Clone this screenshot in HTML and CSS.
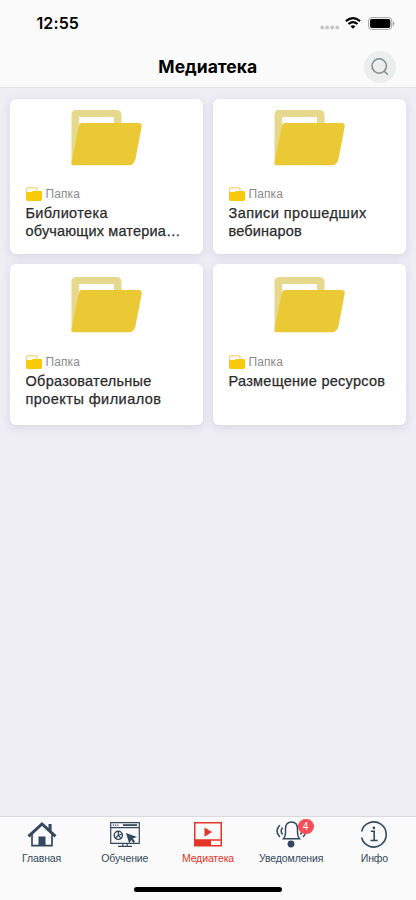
FILE: index.html
```html
<!DOCTYPE html>
<html lang="ru">
<head>
<meta charset="utf-8">
<meta name="viewport" content="width=device-width, initial-scale=1">
<title>Медиатека</title>
<link rel="stylesheet" href="styles.css">
</head>
<body>
<svg class="defs" aria-hidden="true">
  <symbol id="folder" viewBox="0 0 71 56">
    <path fill="#e6d98d" fill-rule="evenodd" d="M5 0H45Q50.500 0 50.500 5V20H8V40L.5 54V5Q.5 0 5 0ZM8 7V20H43V7Z"/>
    <path fill="#ebc934" d="M11 13H67.500Q71.300 13 70.600 17L64.500 49Q63 55.300 57.500 55.300H2Q0 55.300.5 52.500L7.800 16Q8.500 13 11 13Z"/>
  </symbol>
  <symbol id="folder-small" viewBox="0 0 16 14">
    <path fill="none" stroke="#f1dc83" stroke-width="1.400" d="M.7 7V1.700Q.7.7 1.700.7H10Q11 .7 11 1.700V5"/>
    <path fill="#f9ca0c" d="M1 5H5.500L6.700 4H15Q16 4 16 5V12.600Q16 14 14.600 14H1.400Q0 14 0 12.600V6Q0 5 1 5Z"/>
  </symbol>
</svg>
<div class="screen">
  <header class="header">
    <div class="status">
      <span class="clock">12:55</span>
      <div class="indicators">
        <svg width="20" height="5" viewBox="0 0 20 5" fill="#c5c5c6"><circle cx="2.200" cy="2.500" r="1.900"/><circle cx="7.200" cy="2.500" r="1.900"/><circle cx="12.200" cy="2.500" r="1.900"/><circle cx="17.200" cy="2.500" r="1.900"/></svg>
        <svg class="wifi" width="16" height="12" viewBox="0 0 16 12" fill="none" stroke="#000" stroke-width="2.200"><path d="M.9 4.200Q8-1.900 15.100 4.200M3.500 7Q8 3.200 12.500 7"/><path fill="#000" stroke="none" d="M5.500 9.200Q8 7.100 10.500 9.200L8 11.800Z"/></svg>
        <svg class="battery" width="27" height="13" viewBox="0 0 27 13"><rect x=".5" y=".6" width="23.300" height="11.800" rx="3.300" fill="none" stroke="#a2a2a2"/><rect x="2" y="2.100" width="20.300" height="8.800" rx="1.900"/><path fill="#a2a2a2" d="M25 4.300Q26.400 5 26.400 6.500T25 8.700Z"/></svg>
      </div>
    </div>
    <div class="titlebar">
      <h1>Медиатека</h1>
      <button class="search" aria-label="Поиск"><svg width="18" height="18" viewBox="0 0 18 18" fill="none" stroke="#7f8c8d" stroke-width="1.500" stroke-linecap="round"><circle cx="8.200" cy="8" r="7.200"/><path d="M13.200 13.200L16.500 16.200"/></svg></button>
    </div>
  </header>
  <main class="grid">
    <article class="card"><svg class="folder"><use href="#folder"/></svg><div class="kind"><svg><use href="#folder-small"/></svg><span>Папка</span></div><h2><span class="wide">Библиотека</span><br><span class="tight">обучающих материа…</span></h2></article>
    <article class="card"><svg class="folder"><use href="#folder"/></svg><div class="kind"><svg><use href="#folder-small"/></svg><span>Папка</span></div><h2><span class="wider">Записи прошедших</span><br><span class="tight">вебинаров</span></h2></article>
    <article class="card tall"><svg class="folder"><use href="#folder"/></svg><div class="kind"><svg><use href="#folder-small"/></svg><span>Папка</span></div><h2>Образовательные<br><span class="wider">проекты филиалов</span></h2></article>
    <article class="card tall"><svg class="folder"><use href="#folder"/></svg><div class="kind"><svg><use href="#folder-small"/></svg><span>Папка</span></div><h2>Размещение ресурсов</h2></article>
  </main>
  <footer class="footer">
    <nav class="tabs">
      <a class="tab"><svg width="30" height="28" viewBox="0 0 30 28" fill="none" stroke="#34495e"><path stroke-width="3" d="M1.500 15.400L15 3L28.500 15.400"/><path stroke-width="1.700" d="M5 13V24.600H25V13"/><path fill="#34495e" stroke="none" d="M11.500 15.500H18.500V25H11.500ZM21.500 3H24.600V12L21.500 9Z"/></svg><span>Главная</span></a>
      <a class="tab"><svg width="30" height="28" viewBox="0 0 30 28" fill="none" stroke="#34495e" stroke-width="1.200"><path d="M.7 1.600H29.300V22.300H.7ZM.7 6.600H29.300M12.800 22.300V25M17.200 22.300V25M8 25.400H22"/><path stroke-width="1.800" d="M13 4.100H27"/><path stroke-dasharray="1.200 1" d="M2.800 4.100H9"/><circle cx="8.300" cy="14.300" r="4.100" stroke-width="1.400"/><path d="M8.300 10.200V14.300L12 13M8.300 14.300L5.300 17.200M8.300 14.300L11 17.400"/><path fill="#34495e" stroke="none" d="M16 12L27 16L22.800 17.500L25 20.500L23.500 22L21.200 19L19.200 22.500Z"/></svg><span>Обучение</span></a>
      <a class="tab active"><svg width="30" height="28" viewBox="0 0 30 28"><path fill="none" stroke="#e5352b" stroke-width="1.500" d="M1.750 1.750H28.250V24.750H1.750ZM1.750 19H28.250"/><path fill="#e5352b" d="M2 19H18V25H2ZM11.500 6.500L19 11L11.500 15.800Z"/></svg><span>Медиатека</span></a>
      <a class="tab"><svg width="30" height="28" viewBox="0 0 30 28" fill="none" stroke="#34495e" stroke-width="1.500" stroke-linecap="round"><path d="M7.500 17.700Q9.500 15.500 9.500 12V8Q9.500 1 15.500 1T21.500 8V12Q21.500 15.500 23.500 17.700ZM3.500 4.500Q-1.500 10 3.500 15.500M6.300 7Q4 10 6.300 13M27.500 4.500Q32 10 27.500 15.500M24.700 7Q27 10 24.700 13"/><circle cx="15" cy="23" r="2.700" fill="#34495e"/></svg><b class="badge">4</b><span>Уведомления</span></a>
      <a class="tab"><svg width="30" height="28" viewBox="0 0 30 28" fill="none" stroke="#34495e" stroke-width="1.600"><path d="M2.600 10.500A12.500 12.500 0 1 1 2.600 16.500"/><path d="M11.800 10.300H15.200V19.200M11.500 19.500H18.700"/><circle cx="14.900" cy="6.900" r="1.300" fill="#34495e" stroke="none"/></svg><span>Инфо</span></a>
    </nav>
    <div class="home-line"></div>
  </footer>
</div>
</body>
</html>
```
FILE: styles.css
```css
* { box-sizing: border-box; }
body { margin: 0; font-family: "Liberation Sans", Arial, sans-serif; }
.defs { position: absolute; width: 0; height: 0; }
.screen { height: 900px; display: flex; flex-direction: column; background: #efeef5; }
.header { height: 88px; background: #fafafa; border-bottom: 1px solid #e3e3e8; }
.status { height: 46px; display: flex; justify-content: space-between; padding: 0 21px 0 36.500px; }
.clock { font: 600 16px/46px Inter, sans-serif; letter-spacing: .1px; }
.indicators { height: 46px; display: flex; align-items: center; }
.indicators svg:first-child { margin-top: 8px; }
.wifi { margin-left: 5px; }
.battery { margin-left: 7px; }
.titlebar { height: 41px; display: grid; grid-template-columns: 1fr auto 1fr; align-items: center; padding-right: 20.500px; }
h1 { grid-column: 2; margin: 0 0 0 20px; font: 700 17.500px/41px Inter, sans-serif; letter-spacing: 0; }
.search { justify-self: end; width: 32px; height: 32px; border: 0; border-radius: 50%; padding: 0; background: #eceded; display: grid; place-items: center; }
.grid { flex: 1; display: grid; grid-template-columns: 193px 193px; grid-template-rows: 155.500px 161px; gap: 10px; padding: 10.700px 10px; }
.card { background: #fff; border-radius: 6px; padding: 11px 15px 0; box-shadow: 0 2px 10px rgba(50, 50, 90, .13); }
.folder { display: block; width: 71px; height: 56px; margin: 0 auto; }
.kind { display: flex; align-items: center; gap: 4px; height: 16px; margin: 20.500px 0 0 .5px; color: #8c8c8c; font-size: 12px; letter-spacing: .1px; }
.kind svg { width: 16px; height: 14px; }
.tall { padding-top: 12.500px; }
.tall .kind { margin-top: 21px; }
h2 { margin: 3px 0 0 .5px; font-size: 14.500px; line-height: 17.500px; font-weight: 400; letter-spacing: .28px; color: #2b2b2b; white-space: nowrap; -webkit-text-stroke: .25px #2b2b2b; }
.tall h2 { margin-top: 3.500px; }
.wide { letter-spacing: .35px; }
.wider { letter-spacing: .45px; }
.tight { letter-spacing: .17px; }
.footer { height: 84px; background: #fafafa; border-top: 1px solid #d9d8de; }
.tabs { display: grid; grid-template-columns: repeat(5, 1fr); height: 50px; padding-top: 4px; }
.tab { position: relative; display: flex; flex-direction: column; align-items: center; color: #34495e; font-size: 10.500px; letter-spacing: -.12px; }
.tab span { margin-top: 3px; line-height: 13px; }
.tab svg { display: block; overflow: visible; }
.active { color: #e5352b; }
.badge { position: absolute; left: 48px; top: -2px; width: 16px; height: 15px; border-radius: 8px; background: #fb4d55; color: #fff; font-size: 10px; line-height: 15px; font-weight: 400; text-align: center; }
.home-line { width: 148px; height: 5px; border-radius: 3px; background: #000; margin: 19.500px auto 0; }
```
